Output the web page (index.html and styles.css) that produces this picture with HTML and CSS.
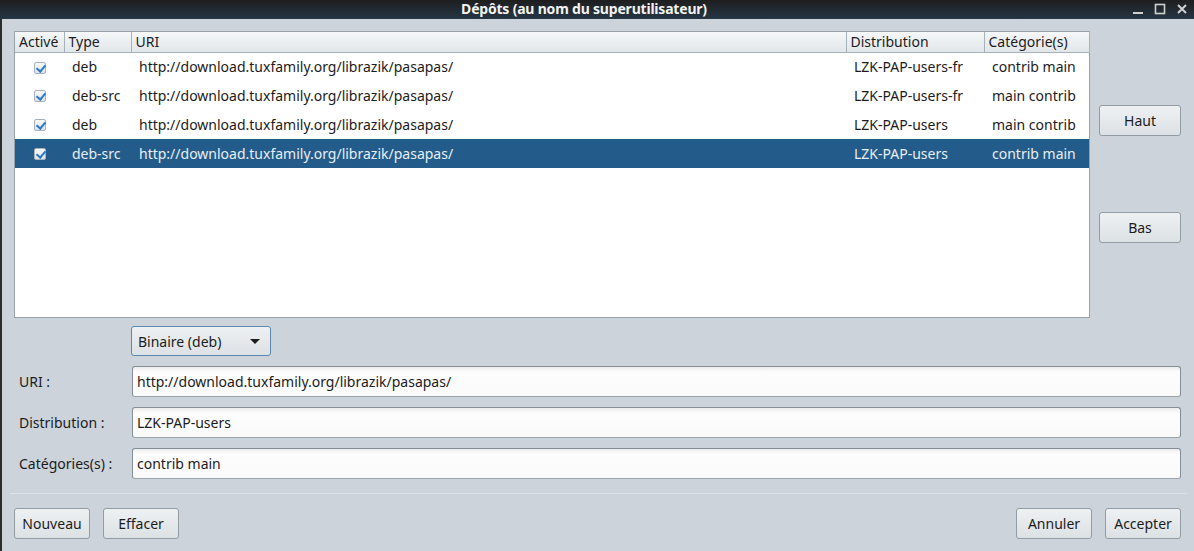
FILE: index.html
```html
<!DOCTYPE html>
<html lang="fr">
<head>
    <meta charset="UTF-8">
    <title>Dépôts (au nom du superutilisateur)</title>
    <link rel="stylesheet" href="styles.css">
</head>
<body>
    <div class="titlebar">
        <span class="title">Dépôts (au nom du superutilisateur)</span>
        <div class="wm-buttons">
            <svg width="12" height="12" viewBox="0 0 12 12"><rect x="1" y="9" width="10" height="2" fill="#d0d0d0"/></svg>
            <svg width="12" height="12" viewBox="0 0 12 12"><rect x="1.5" y="1.5" width="9" height="9" fill="none" stroke="#d0d0d0" stroke-width="1.6"/></svg>
            <svg width="12" height="12" viewBox="0 0 12 12"><path d="M2 2 L10 10 M10 2 L2 10" stroke="#d0d0d0" stroke-width="2"/></svg>
        </div>
    </div>

    <div class="window">
        <div class="top">
            <div class="list">
                <table class="repos">
                    <colgroup>
                        <col class="c-active">
                        <col class="c-type">
                        <col class="c-uri">
                        <col class="c-dist">
                        <col class="c-cat">
                    </colgroup>
                    <thead>
                        <tr>
                            <th>Activé</th>
                            <th>Type</th>
                            <th>URI</th>
                            <th>Distribution</th>
                            <th>Catégorie(s)</th>
                        </tr>
                    </thead>
                    <tbody>
                        <tr>
                            <td class="check"><span class="box"></span></td>
                            <td>deb</td>
                            <td>http://download.tuxfamily.org/librazik/pasapas/</td>
                            <td>LZK-PAP-users-fr</td>
                            <td>contrib main</td>
                        </tr>
                        <tr>
                            <td class="check"><span class="box"></span></td>
                            <td>deb-src</td>
                            <td>http://download.tuxfamily.org/librazik/pasapas/</td>
                            <td>LZK-PAP-users-fr</td>
                            <td>main contrib</td>
                        </tr>
                        <tr>
                            <td class="check"><span class="box"></span></td>
                            <td>deb</td>
                            <td>http://download.tuxfamily.org/librazik/pasapas/</td>
                            <td>LZK-PAP-users</td>
                            <td>main contrib</td>
                        </tr>
                        <tr class="selected">
                            <td class="check"><span class="box"></span></td>
                            <td>deb-src</td>
                            <td>http://download.tuxfamily.org/librazik/pasapas/</td>
                            <td>LZK-PAP-users</td>
                            <td>contrib main</td>
                        </tr>
                    </tbody>
                </table>
            </div>
            <div class="side">
                <button class="btn side-btn">Haut</button>
                <button class="btn side-btn bas">Bas</button>
            </div>
        </div>

        <div class="form">
            <div></div>
            <div class="combo">
                <span>Binaire (deb)</span>
                <span class="arrow"></span>
            </div>

            <label>URI :</label>
            <div class="field">http://download.tuxfamily.org/librazik/pasapas/</div>

            <label>Distribution :</label>
            <div class="field">LZK-PAP-users</div>

            <label>Catégories(s) :</label>
            <div class="field">contrib main</div>
        </div>

        <div class="separator"></div>

        <div class="actions">
            <div class="group">
                <button class="btn">Nouveau</button>
                <button class="btn">Effacer</button>
            </div>
            <div class="group">
                <button class="btn">Annuler</button>
                <button class="btn">Accepter</button>
            </div>
        </div>
    </div>
</body>
</html>
```

FILE: styles.css
```css
* {
    box-sizing: border-box;
}

body {
    margin: 0;
    width: 1194px;
    height: 551px;
    overflow: hidden;
    background: #2a2c2e;
    font-family: 'Noto Sans', 'DejaVu Sans', sans-serif;
    font-size: 14px;
    color: #1c1c1c;
}

/* window title */
.titlebar {
    height: 19px;
    background: linear-gradient(to bottom, #1e1e1e, #263644);
    display: flex;
    align-items: center;
    justify-content: center;
    position: relative;
}

.title {
    color: #f2f2f2;
    font-weight: bold;
    font-size: 14px;
    letter-spacing: -0.2px;
    margin-left: -26px;
    margin-top: -2px;
}

.wm-buttons {
    position: absolute;
    right: 6px;
    top: 3px;
    display: flex;
    gap: 10px;
}

.window {
    margin-left: 2px;
    height: 532px;
    background: #ccd3da;
    padding: 12px 13px 12px 12px;
}

/* list + side buttons */
.top {
    display: flex;
    height: 287px;
}

.list {
    width: 1076px;
    height: 287px;
    background: #fff;
    border: 1px solid #97a2ab;
}

.repos {
    width: 100%;
    border-collapse: collapse;
    table-layout: fixed;
}

.c-active { width: 49px; }
.c-type { width: 67px; }
.c-uri { width: 715px; }
.c-dist { width: 138px; }
.c-cat { width: 105px; }

.repos th {
    height: 20px;
    padding: 0 0 0 4px;
    text-align: left;
    font-weight: normal;
    background: linear-gradient(to bottom, #f5f7f8, #e1e6ea);
    border-right: 1px solid #a7b1b9;
    border-bottom: 1px solid #a7b1b9;
    line-height: 19px;
    white-space: nowrap;
}

.repos td {
    height: 29px;
    padding: 0 0 0 8px;
    white-space: nowrap;
    overflow: hidden;
}

.repos td.check {
    padding: 0 0 2px 0;
    text-align: center;
}

.repos tr.selected td {
    background: #235c8b;
    color: #e8eef4;
}

.box {
    display: inline-block;
    width: 12px;
    height: 12px;
    border: 1px solid #a9b2ba;
    border-radius: 2px;
    background: linear-gradient(to bottom, #f7f8f9, #dfe3e7);
    position: relative;
    vertical-align: middle;
}

.box::after {
    content: "";
    position: absolute;
    left: 3px;
    top: 0px;
    width: 4px;
    height: 7px;
    border-right: 2px solid #2d7bc4;
    border-bottom: 2px solid #2d7bc4;
    transform: rotate(40deg);
}

.side {
    flex: 1;
    display: flex;
    flex-direction: column;
    align-items: flex-end;
    padding-top: 74px;
}

.btn {
    height: 31px;
    min-width: 76px;
    padding: 0 6px;
    font-family: inherit;
    font-size: 14px;
    color: #1c1c1c;
    background: linear-gradient(to bottom, #eef1f3, #dce1e5);
    border: 1px solid #919ca5;
    border-radius: 3px;
}

.side-btn {
    width: 82px;
}

.side-btn.bas {
    margin-top: 76px;
}

/* form */
.form {
    display: grid;
    grid-template-columns: 118px 1fr;
    grid-template-rows: 30px 31px 31px 31px;
    row-gap: 10px;
    margin-top: 8px;
    align-items: center;
}

.form label {
    padding-left: 5px;
    white-space: nowrap;
}

.combo {
    width: 140px;
    height: 30px;
    margin-left: -1px;
    display: flex;
    align-items: center;
    justify-content: space-between;
    padding: 0 10px 0 6px;
    background: linear-gradient(to bottom, #eef1f3, #dce1e5);
    border: 1px solid #5d87ad;
    border-radius: 3px;
}

.arrow {
    width: 0;
    height: 0;
    border-left: 5px solid transparent;
    border-right: 5px solid transparent;
    border-top: 5px solid #1c1c1c;
}

.field {
    height: 31px;
    line-height: 29px;
    padding-left: 4px;
    background: linear-gradient(to bottom, #ececec, #fdfdfd 5px, #fafafa);
    border: 1px solid #838e97;
    border-bottom-color: #9aa4ac;
    border-radius: 3px;
}

.separator {
    height: 1px;
    background: #dde2e6;
    margin: 14px -6px 0 -4px;
}

.actions {
    display: flex;
    justify-content: space-between;
    margin-top: 14px;
}

.group {
    display: flex;
    gap: 13px;
}
```
